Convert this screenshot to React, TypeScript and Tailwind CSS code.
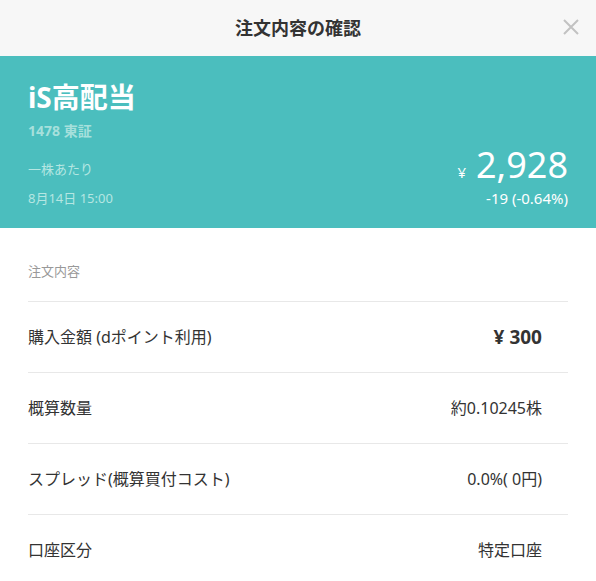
const rows = [
  { label: "購入金額 (dポイント利用)", value: "¥ 300", strong: true },
  { label: "概算数量", value: "約0.10245株" },
  { label: "スプレッド(概算買付コスト)", value: "0.0%( 0円)" },
  { label: "口座区分", value: "特定口座" },
]

export default function App() {
  return (
    <div className="w-[596px] h-[581px] overflow-hidden bg-white text-[#333] font-['Noto_Sans','Noto_Sans_CJK_JP',sans-serif]">
      <header className="relative h-14 bg-[#f7f7f7] flex items-center justify-center">
        <h1 className="text-[18px] font-bold text-[#333]">注文内容の確認</h1>
        <button className="absolute left-[563px] top-[19px]">
          <svg width="16" height="16" viewBox="0 0 16 16" fill="none" stroke="#c2c2c2" strokeWidth="2">
            <path d="M1 1L15 15M15 1L1 15" />
          </svg>
        </button>
      </header>

      <section className="h-[172px] bg-[#4bbebe] px-7 pt-[23px] text-white">
        <div className="text-[28px] font-bold leading-[36px]">iS高配当</div>
        <div className="mt-[7px] text-[14px] font-bold leading-[18px] text-[#a6e0dc]">1478 東証</div>
        <div className="mt-[5px] flex items-end justify-between">
          <div className="text-[13px] text-[#b5e6e2]">
            <div className="leading-[18px]">一株あたり</div>
            <div className="mt-[11px] leading-[18px]">8月14日 15:00</div>
          </div>
          <div className="flex flex-col items-end">
            <div className="flex items-baseline pt-[3px] leading-[34px]">
              <span className="text-[15px] mr-[10px]">¥</span>
              <span className="text-[36px]">2,928</span>
            </div>
            <div className="text-[15px] leading-[18px]">-19 (-0.64%)</div>
          </div>
        </div>
      </section>

      <main className="px-7">
        <div className="h-[73px] flex items-center pt-[14px] text-[13px] text-[#999]">注文内容</div>
        {rows.map((r) => (
          <div key={r.label} className="h-[71px] border-t border-[#e8e8e8] flex items-center justify-between pr-[26px]">
            <span className="text-[16px] text-[#333]">{r.label}</span>
            <span className={r.strong ? "text-[19px] font-bold text-[#333]" : "text-[16px] text-[#333]"}>{r.value}</span>
          </div>
        ))}
      </main>
    </div>
  )
}
